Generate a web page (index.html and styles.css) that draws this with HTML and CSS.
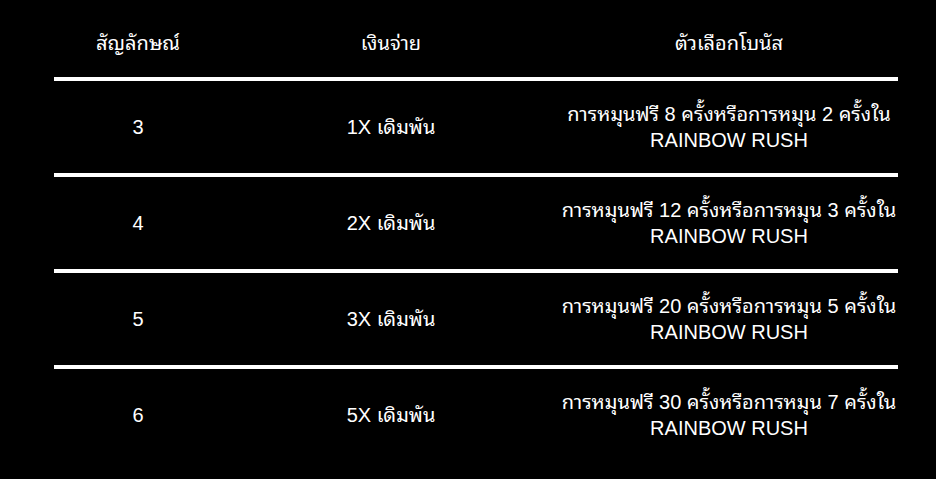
FILE: index.html
```html
<!DOCTYPE html>
<html lang="th">
<head>
<meta charset="utf-8">
<link rel="stylesheet" href="styles.css">
</head>
<body>
<div class="table">
  <div class="row head">
    <div class="cell">สัญลักษณ์</div>
    <div class="cell">เงินจ่าย</div>
    <div class="cell">ตัวเลือกโบนัส</div>
  </div>
  <div class="row">
    <div class="cell">3</div>
    <div class="cell">1X เดิมพัน</div>
    <div class="cell">การหมุนฟรี 8 ครั้งหรือการหมุน 2 ครั้งใน<br>RAINBOW RUSH</div>
  </div>
  <div class="row">
    <div class="cell">4</div>
    <div class="cell">2X เดิมพัน</div>
    <div class="cell">การหมุนฟรี 12 ครั้งหรือการหมุน 3 ครั้งใน<br>RAINBOW RUSH</div>
  </div>
  <div class="row">
    <div class="cell">5</div>
    <div class="cell">3X เดิมพัน</div>
    <div class="cell">การหมุนฟรี 20 ครั้งหรือการหมุน 5 ครั้งใน<br>RAINBOW RUSH</div>
  </div>
  <div class="row">
    <div class="cell">6</div>
    <div class="cell">5X เดิมพัน</div>
    <div class="cell">การหมุนฟรี 30 ครั้งหรือการหมุน 7 ครั้งใน<br>RAINBOW RUSH</div>
  </div>
</div>
</body>
</html>
```

FILE: styles.css
```css
html, body {
  margin: 0;
  padding: 0;
  background: #000;
  height: 100%;
}
body {
  color: #fff;
  font-family: "Liberation Sans", "Noto Sans Thai Looped", "Noto Sans Thai", Tahoma, sans-serif;
  font-size: 20px;
}
.table {
  width: 844px;
  margin-left: 54px;
  display: flex;
  flex-direction: column;
}
.row {
  display: grid;
  grid-template-columns: 168px 338px 338px;
  height: 92px;
  border-top: 4px solid #fff;
}
.row.head {
  height: 77px;
  border-top: none;
}
.cell {
  display: flex;
  align-items: center;
  justify-content: center;
  text-align: center;
  line-height: 26px;
}
.row.head .cell {
  padding-top: 9px;
}
```
